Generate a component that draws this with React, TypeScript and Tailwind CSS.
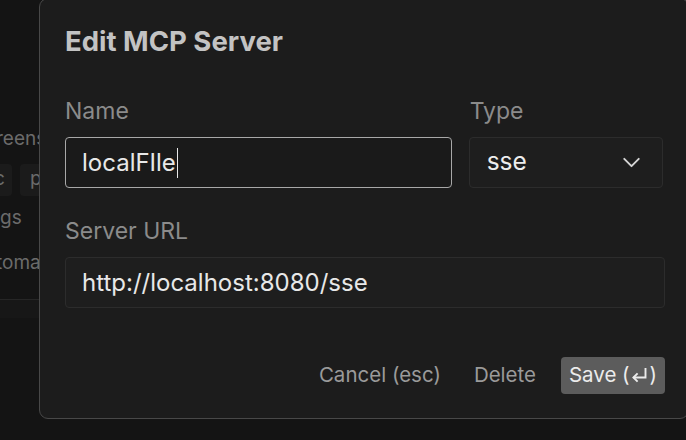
import { ChevronDown } from 'lucide-react'

function ReturnGlyph() {
  return (
    <svg width="18" height="17" viewBox="0 0 18 17" fill="none" className="mx-[1px] -mt-[1px] shrink-0">
      <path d="M14.5 1v9.5H2.5" stroke="currentColor" strokeWidth="1.9" />
      <path d="M6.6 6.3 2.4 10.5l4.2 4.2" stroke="currentColor" strokeWidth="1.9" />
    </svg>
  )
}

export default function App() {
  return (
    <div
      className="relative h-[440px] w-[686px] overflow-hidden bg-[#141414] text-[#6b6b6b]"
      style={{ fontFamily: 'Inter, "Noto Sans", sans-serif' }}
    >
      {/* page behind the dialog, mostly covered */}
      <div className="flex flex-col pt-[124px] text-[19px]">
        <div className="-ml-[4px] h-[30px] leading-[30px]">reens</div>
        <div className="mt-[10px] flex gap-[8px]">
          <div className="-ml-[10px] h-[32px] w-[22px] rounded-[4px] bg-[#1b1b1b] pl-[4px] leading-[30px]">c</div>
          <div className="h-[32px] w-[40px] rounded-[4px] bg-[#1b1b1b] pl-[10px] leading-[30px]">p</div>
        </div>
        <div className="mt-[8px] h-[30px] leading-[28px]">gs</div>
        <div className="-ml-[4px] mt-[14px] h-[30px] leading-[30px]">toma</div>
        <div className="mt-[21px] h-[19px] border-t border-[#262626] bg-[#171717]" />
      </div>

      {/* dialog */}
      <div className="absolute left-[39px] top-[-2px] h-[421px] w-[650px] rounded-[9px] border border-[#484848] bg-[#1c1c1c] pl-[25px] pr-[25px]">
        <h2 className="mt-[26px] text-[27.5px] font-bold leading-[32px] text-[#c3c3c3]">Edit MCP Server</h2>

        <div className="mt-[43px] flex gap-[17px]">
          <div className="flex w-[388px] flex-col">
            <label className="h-[37px] text-[23px] leading-[22px] text-[#8b8b8b]">Name</label>
            <div className="flex h-[51px] items-center rounded-[4px] border-[1.5px] border-[#a8a8a8] bg-[#1a1a1a] pl-[16px] text-[24px] text-[#e8e8e8]">
              localFIle
              <span className="ml-[1px] h-[30px] w-[1.5px] bg-[#e8e8e8]" />
            </div>
          </div>
          <div className="flex w-[195px] flex-col">
            <label className="h-[37px] pl-[1px] text-[23px] leading-[22px] text-[#8b8b8b]">Type</label>
            <div className="flex h-[51px] items-center justify-between rounded-[4px] border border-[#2c2c2c] bg-[#1e1e1e] pl-[17px] pr-[16px] text-[24.5px] text-[#ededed]">
              <span className="-mt-[2px]">sse</span>
              <ChevronDown size={29} strokeWidth={1.6} className="text-[#d6d6d6]" />
            </div>
          </div>
        </div>

        <label className="mt-[32px] block h-[37px] text-[23px] leading-[22px] text-[#8b8b8b]">Server URL</label>
        <div className="flex h-[51px] w-[600px] items-center rounded-[4px] border border-[#2c2c2c] bg-[#1e1e1e] pl-[16px] text-[24px] text-[#e8e8e8]">
          http://localhost:8080/sse
        </div>

        <div className="mt-[49px] flex w-[600px] items-center justify-end text-[20.5px]">
          <button className="text-[#9a9a9a]">Cancel (esc)</button>
          <button className="ml-[33px] text-[#9a9a9a]">Delete</button>
          <button className="ml-[25px] flex h-[37px] w-[104px] shrink-0 items-center justify-center whitespace-nowrap rounded-[4px] bg-[#5c5c5c] text-[#ececec]">
            Save (
            <ReturnGlyph />)
          </button>
        </div>
      </div>
    </div>
  )
}
